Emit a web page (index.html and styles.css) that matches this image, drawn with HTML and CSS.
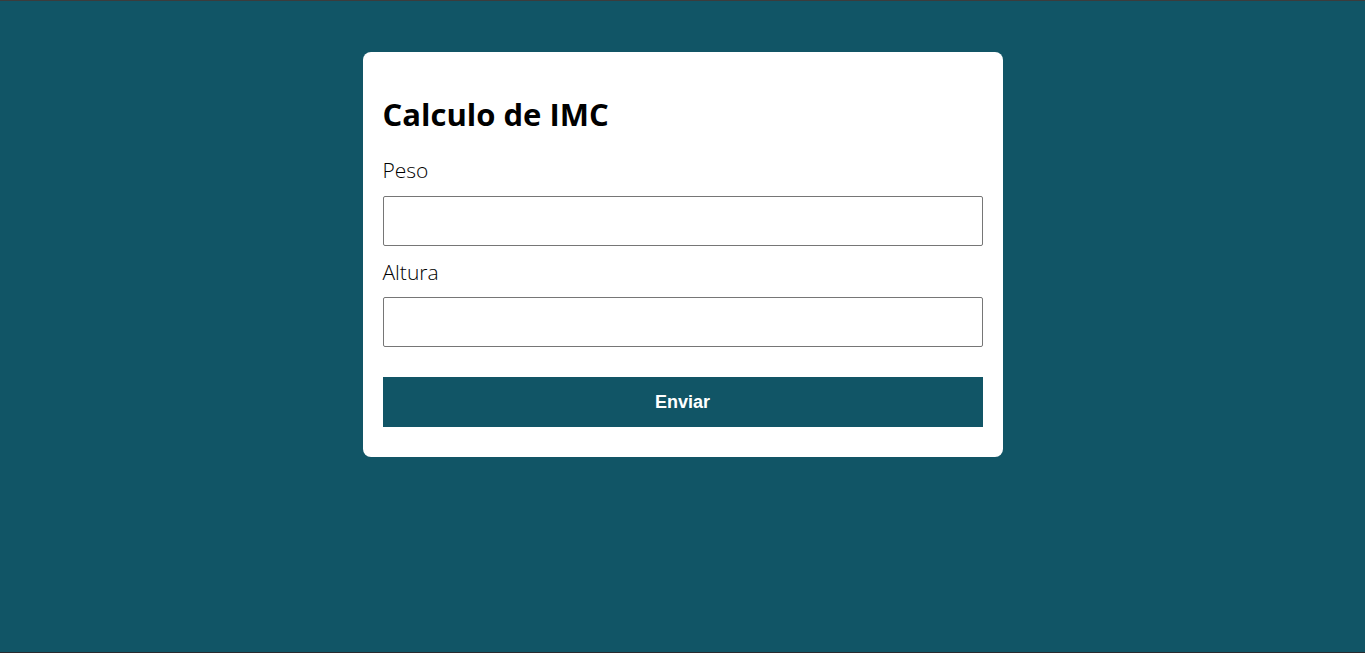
FILE: index.html
```html
<!DOCTYPE html>
<html lang="pt-BR">

<head>
    <meta charset="UTF-8">
    <meta name="viewport" content="width=device-width, initial-scale=1.0">
    <title>Calculo de IMC</title>
    <link rel="stylesheet" href="styles.css">
</head>

<body>
    <main class="page">
        <form class="imc-card">
            <h1>Calculo de IMC</h1>

            <label class="imc-label" for="peso">Peso</label>
            <input class="imc-input" type="text" id="peso">

            <label class="imc-label" for="altura">Altura</label>
            <input class="imc-input" type="text" id="altura">

            <button class="imc-button" type="button">Enviar</button>
        </form>
    </main>
</body>

</html>
```

FILE: styles.css
```css
html,
body {
    margin: 0;
    height: 100%;
}

body {
    background-color: #115566;
    font-family: "Open Sans", Arial, sans-serif;
    border-top: 1px solid #3c3c3c;
    border-bottom: 1px solid #2a2a2e;
    box-sizing: border-box;
}

.page {
    display: flex;
    justify-content: center;
    padding-top: 51px;
}

.imc-card {
    width: 640px;
    box-sizing: border-box;
    background: #fff;
    border-radius: 8px;
    padding: 20px 20px 30px;
    display: flex;
    flex-direction: column;
}

.imc-card h1 {
    font-size: 31px;
    font-weight: 700;
    color: #000;
    margin: 22px 0 22px;
    line-height: 1.3;
}

.imc-label {
    font-size: 21px;
    font-weight: 300;
    color: #000;
    line-height: 1.4;
    margin-bottom: 10px;
}

.imc-input {
    height: 50px;
    box-sizing: border-box;
    border: 1px solid #767676;
    border-radius: 2px;
    margin: 0 0 12px;
    font-size: 18px;
}

.imc-button {
    margin-top: 18px;
    height: 50px;
    border: none;
    background-color: #115566;
    color: #fff;
    font-family: Arial, "Liberation Sans", sans-serif;
    font-size: 18px;
    font-weight: 700;
    cursor: pointer;
}
```
